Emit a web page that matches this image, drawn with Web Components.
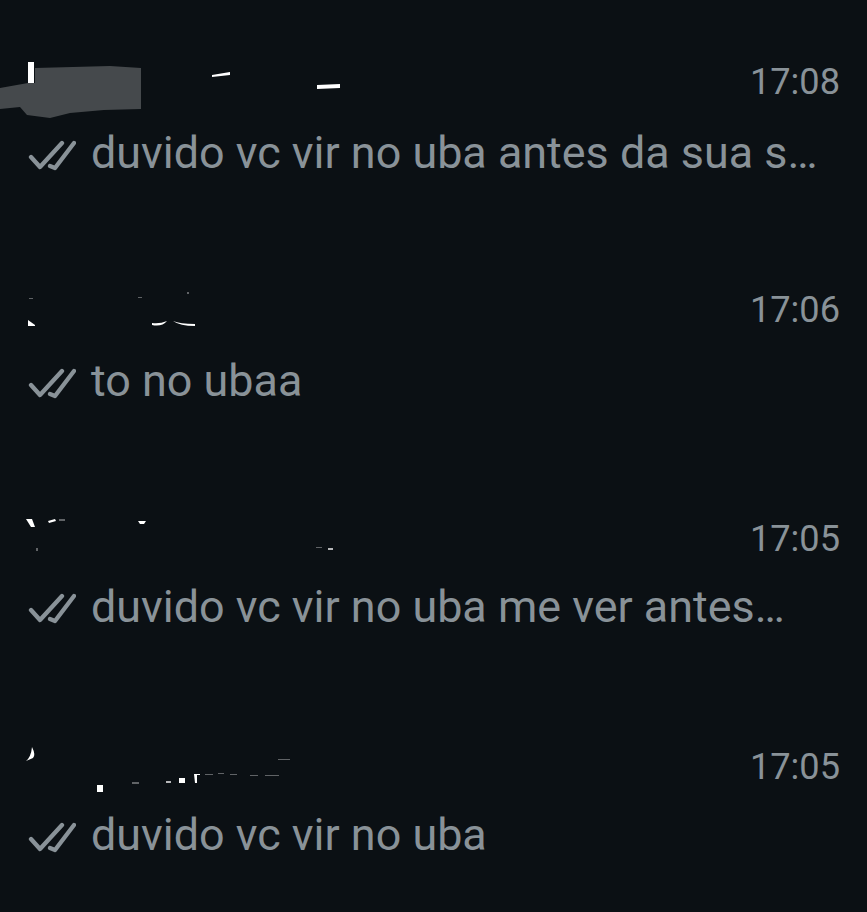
<!DOCTYPE html>
<html lang="pt">
<head>
<meta charset="utf-8">
<title>Conversas</title>
<style>
  html, body { margin: 0; background: #0b1014; }
  body { font-family: Roboto, "Liberation Sans", sans-serif; }
  svg.name { display: block; width: 700px; height: 60px; overflow: visible; }
  .w { fill: #fff; }
  .f { fill: #fff; opacity: .35; }
</style>
</head>
<body>
<chat-list>
  <chat-row style="--line-gap: 9px" time="17:08" text="duvido vc vir no uba antes da sua s…">
    <svg class="name" slot="name" viewBox="0 0 700 60">
      <polygon points="35,16 110,14 141,16 141,57 104,58 70,61 50,66 27,63 20,55 0,57 0,36 28,31 35,31" fill="#45494c"/>
      <rect class="w" x="28" y="10" width="6" height="21"/>
      <polygon class="w" points="212,23 230,20 230,23 212,25"/>
      <polygon class="w" points="317,33 340,32 340,36 317,37"/>
    </svg>
  </chat-row>
  <chat-row style="--line-gap: 9px" time="17:06" text="to no ubaa">
    <svg class="name" slot="name" viewBox="0 0 700 60">
      <polygon class="w" points="28,40 35,45 35,46 28,46"/>
      <path class="w" d="M152 43 Q160 44 167 41 Q162 47 152 45Z"/>
      <path class="w" d="M173 41 Q180 44 195 44 L195 46 Q180 46 173 41Z"/>
      <rect class="f" x="187" y="12" width="2" height="2"/>
      <rect class="f" x="29" y="18" width="4" height="1"/>
      <rect class="f" x="138" y="17" width="4" height="1"/>
    </svg>
  </chat-row>
  <chat-row time="17:05" text="duvido vc vir no uba me ver antes…">
    <svg class="name" slot="name" viewBox="0 0 700 60">
      <polygon class="w" points="26,10 32,10 35,18 31,18"/>
      <polygon class="w" points="48,12 55,10 56,12 49,14"/>
      <rect class="f" x="59" y="10" width="6" height="2"/>
      <path class="w" d="M138 12 H146 L144 15 H140Z"/>
      <rect class="w" x="328" y="39" width="5" height="2" opacity=".7"/>
      <rect class="f" x="316" y="38" width="6" height="1"/>
      <rect class="f" x="36" y="39" width="2" height="3"/>
    </svg>
  </chat-row>
  <chat-row time="17:05" text="duvido vc vir no uba">
    <svg class="name" slot="name" viewBox="0 0 700 60">
      <path class="w" d="M32 10 Q36 18 33 21 L26 24 Q31 20 32 10Z"/>
      <rect class="w" x="97" y="48" width="6" height="7"/>
      <rect class="w" x="179" y="41" width="6" height="5"/>
      <path class="w" d="M194 37 H200 V38 H197 V46 H195Z"/>
      <rect class="f" x="132" y="45" width="7" height="2"/>
      <rect class="w" x="166" y="44" width="5" height="2" opacity=".7"/>
      <rect class="f" x="205" y="37" width="8" height="1"/>
      <rect class="f" x="218" y="36" width="6" height="1"/>
      <rect class="f" x="230" y="37" width="7" height="1"/>
      <rect class="f" x="250" y="38" width="8" height="1"/>
      <rect class="f" x="265" y="38" width="14" height="1"/>
      <rect class="f" x="278" y="22" width="12" height="1"/>
    </svg>
  </chat-row>
</chat-list>

<template id="chat-list-tpl">
  <style>
    :host {
      display: flex;
      flex-direction: column;
      padding-top: 52px;
      height: 860px;
      overflow: hidden;
      background: #0b1014;
    }
  </style>
  <slot></slot>
</template>

<template id="chat-row-tpl">
  <style>
    :host {
      display: block;
      height: 228.4px;
      flex: none;
      color: #899298;
    }
    .top {
      display: flex;
      justify-content: space-between;
      align-items: center;
      height: 60px;
      padding-right: 27px;
    }
    .time { font-size: 36.2px; line-height: 60px; }
    .bottom {
      display: flex;
      align-items: center;
      gap: 15px;
      height: 64px;
      margin-top: var(--line-gap, 6px);
      padding-left: 28px;
    }
    svg { display: block; flex: none; margin-top: 3px; }
    .text { font-size: 44.9px; line-height: 64px; white-space: nowrap; }
  </style>
  <div class="top">
    <slot name="name"></slot>
    <span class="time"></span>
  </div>
  <div class="bottom">
    <svg width="48" height="32" viewBox="0 0 48 32" fill="none" stroke="#899298" stroke-width="4.3" stroke-linecap="round" stroke-linejoin="round">
      <path d="M3 18 L12 28 L34 4"/>
      <path d="M22 27 L27 29 L46 4"/>
    </svg>
    <span class="text"></span>
  </div>
</template>

<script>
class ChatList extends HTMLElement {
    constructor() {
        super();
        this.attachShadow({ mode: 'open' });
        const template = document.getElementById('chat-list-tpl');
        this.shadowRoot.appendChild(template.content.cloneNode(true));
    }
}

class ChatRow extends HTMLElement {
    constructor() {
        super();
        this.attachShadow({ mode: 'open' });
        const template = document.getElementById('chat-row-tpl');
        this.shadowRoot.appendChild(template.content.cloneNode(true));
    }

    connectedCallback() {
        this.shadowRoot.querySelector('.time').textContent = this.getAttribute('time');
        this.shadowRoot.querySelector('.text').textContent = this.getAttribute('text');
    }
}

customElements.define('chat-list', ChatList);
customElements.define('chat-row', ChatRow);
</script>
</body>
</html>
